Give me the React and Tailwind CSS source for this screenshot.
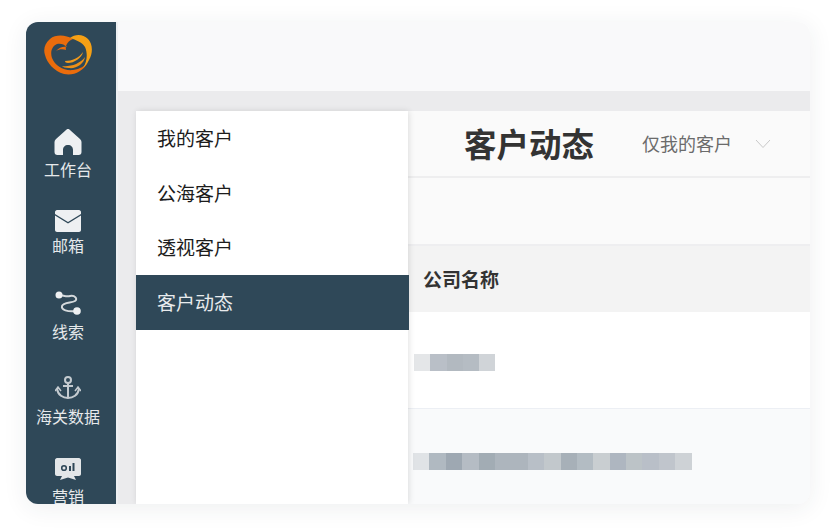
import React from 'react';

const menus = ['我的客户', '公海客户', '透视客户', '客户动态'];

const row1 = ['bg-[#e4e6e8]', 'bg-[#b9bfc7]', 'bg-[#b2b9c0]', 'bg-[#b5bcc3]', 'bg-[#d0d4d8]'];
const row2 = [
  'bg-[#e0e3e6]', 'bg-[#b0b9c1]', 'bg-[#9ea8b2]', 'bg-[#b5bcc4]', 'bg-[#a2acb4]', 'bg-[#adb5bd]',
  'bg-[#adb5bd]', 'bg-[#b8bfc7]', 'bg-[#c2c8cc]', 'bg-[#a7b0b8]', 'bg-[#b3bcc3]', 'bg-[#c9ced1]',
  'bg-[#aeb6c0]', 'bg-[#bcc3c7]', 'bg-[#b9bfc8]', 'bg-[#c0c5cc]', 'bg-[#ced2d6]',
];

function Logo() {
  return (
    <svg width="48" height="40" viewBox="0 0 48 40">
      <path d="M29 4C22 0 12 -1 6 4C1 8 -1 14 1 20C3 28 10 36 20 39C29 41 39 37 44 27C41 31 36 34 29 35C20 36 11 31 8 23C6 17 8 11 13 9C16 8 20 9 23 12C20 11 15 12 12 16C15 14 19 14 22 15C21 10 24 6 29 4Z" fill="#ea6c0c" />
      <path d="M26 3C31 -1 39 -1 44 4C49 9 49 18 45 25C43 29 41 31 39 33C43 27 44 19 41 12C38 7 32 5 26 3Z" fill="#f6a015" />
      <path d="M21 26C28 26 35 23 39 17C38 23 30 28 24 28C22 28 21 27 21 26Z" fill="#f29a1c" />
      <path d="M18 31C26 32 36 29 41 22C40 29 32 34 25 33C21 33 19 32 18 31Z" fill="#ee8f17" />
    </svg>
  );
}

function HomeIcon() {
  return (
    <svg width="28" height="28" viewBox="0 0 28 28">
      <path d="M14 1C15 1 15.500 1.500 16.500 2.500L26 11C27 12 27.500 13 27.500 14V24C27.500 26 26.500 27 24.500 27H19V22C19 19 17 17 14 17C11 17 9 19 9 22V27H3.500C1.500 27 0.500 26 0.500 24V14C0.500 13 1 12 2 11L11.500 2.500C12.500 1.500 13 1 14 1Z" fill="#eef0f2" />
    </svg>
  );
}

function MailIcon() {
  return (
    <svg width="26" height="22" viewBox="0 0 26 22">
      <path d="M2 0H24C25 0 26 1 26 2V4L13 12L0 4V2C0 1 1 0 2 0Z" fill="#eef0f2" />
      <path d="M0 5.500L13 13.500L26 5.500V20C26 21 25 22 24 22H2C1 22 0 21 0 20Z" fill="#eef0f2" />
    </svg>
  );
}

function TraceIcon() {
  return (
    <svg width="26" height="26" viewBox="0 0 26 26">
      <path d="M4 4C8 4 11 6 15 5C20 4 23 8 20 10C17 12 8 11 7 15C6 19 12 21 22 20" fill="none" stroke="#d4d9dc" strokeWidth="2" />
      <circle cx="4" cy="4" r="3.500" fill="#eef0f2" />
      <circle cx="22" cy="20" r="3.800" fill="#eef0f2" />
    </svg>
  );
}

function AnchorIcon() {
  return (
    <svg width="26" height="24" viewBox="0 0 26 24" fill="none" stroke="#c4cbd0" strokeWidth="2">
      <circle cx="13" cy="4" r="3" />
      <path d="M13 7V22M8 10H18" />
      <path d="M2 13C3 19 8 22 13 22C18 22 23 19 24 13" />
      <path d="M0 15L3 11L6 15M20 15L23 11L26 15" strokeWidth="1.500" />
    </svg>
  );
}

function BoardIcon() {
  return (
    <svg width="26" height="24" viewBox="0 0 26 24">
      <path d="M2 0H24C25 0 26 1 26 2V16C26 17 25 18 24 18H19L21 22L13 19.500L5 22L7 18H2C1 18 0 17 0 16V2C0 1 1 0 2 0Z" fill="#e3e6e8" />
      <circle cx="9" cy="10" r="2.300" fill="none" stroke="#2f4858" strokeWidth="1.600" />
      <path d="M15 8V13M18.500 5V13" stroke="#2f4858" strokeWidth="2" />
    </svg>
  );
}

function NavItem({ icon, label, className }) {
  return (
    <div className={`flex flex-col items-center text-[16px] leading-[20px] text-[#e6e9eb] ${className}`}>
      {icon}
      <span>{label}</span>
    </div>
  );
}

export default function App() {
  return (
    <div className="w-[832px] h-[529px] bg-white pl-[26px] pt-[22px] font-['Noto_Sans_CJK_SC',sans-serif]">
      <div className="flex w-[784px] h-[482px] overflow-hidden rounded-xl shadow-[0_4px_24px_rgba(40,50,70,0.08)]">
        {/* sidebar */}
        <aside className="flex w-[90px] shrink-0 flex-col items-center overflow-hidden bg-[#2f4858] pr-[6px]">
          <div className="mt-[13px] h-[40px] shrink-0"><Logo /></div>
          <NavItem className="mt-[53px] shrink-0 gap-[3px]" icon={<HomeIcon />} label="工作台" />
          <NavItem className="mt-[31px] shrink-0 gap-[3px]" icon={<MailIcon />} label="邮箱" />
          <NavItem className="mt-[36px] shrink-0 gap-[4px]" icon={<TraceIcon />} label="线索" />
          <NavItem className="mt-[35px] shrink-0 gap-[6px]" icon={<AnchorIcon />} label="海关数据" />
          <NavItem className="mt-[32px] shrink-0 gap-[4px]" icon={<BoardIcon />} label="营销" />
        </aside>

        <main className="flex min-w-0 flex-1 flex-col border-l-2 border-[#eef0f2]">
          <div className="h-[69px] shrink-0 bg-[#f9f9fa]" />
          <div className="h-[20px] shrink-0 bg-[#ebebed]" />

          <div className="flex min-h-0 flex-1 bg-[#ebebed] pl-[18px]">
            {/* sub menu */}
            <nav className="z-10 w-[272px] shrink-0 bg-white shadow-[1px_0_6px_rgba(0,0,0,0.12)]">
              {menus.map((m, i) => (
                <div
                  key={m}
                  className={`flex h-[54.700px] items-center pl-[21px] text-[19px] ${i === 3 ? 'w-[273px] bg-[#2f4858] text-[#e8ebed]' : 'text-[#1c1c1c]'}`}
                >
                  {m}
                </div>
              ))}
            </nav>

            {/* content */}
            <section className="flex min-w-0 flex-1 flex-col bg-white">
              <div className="flex h-[67px] shrink-0 items-center border-b-2 border-[#eeeeef] bg-[#fafafa] pl-[56px]">
                <h1 className="text-[32.500px] font-bold text-[#333333]">客户动态</h1>
                <span className="ml-[48px] text-[18px] text-[#6b6b6b]">仅我的客户</span>
                <svg className="ml-[23px]" width="16" height="10" viewBox="0 0 16 10" fill="none" stroke="#c8c8c8" strokeWidth="1">
                  <path d="M1 1L8 8.500L15 1" />
                </svg>
              </div>
              <div className="h-[68px] shrink-0 border-b-2 border-[#eeeef0] bg-[#fafafa]" />
              <div className="flex h-[66px] shrink-0 items-center bg-[#f3f3f3] pl-[15px] text-[19px] font-bold text-[#333333]">
                公司名称
              </div>
              <div className="h-[97px] shrink-0 border-b border-[#eceff4] pl-[6px] pt-[42px]">
                <div className="flex h-[17px] blur-[0.4px]">
                  {row1.map((c, i) => <span key={i} className={`h-full w-[16.300px] ${c}`} />)}
                </div>
              </div>
              <div className="flex flex-1 bg-[#f9fafb] pl-[5px] pt-[44px]">
                <div className="flex h-[17px] blur-[0.4px]">
                  {row2.map((c, i) => <span key={i} className={`h-full w-[16.400px] ${c}`} />)}
                </div>
              </div>
            </section>
          </div>
        </main>
      </div>
    </div>
  );
}
